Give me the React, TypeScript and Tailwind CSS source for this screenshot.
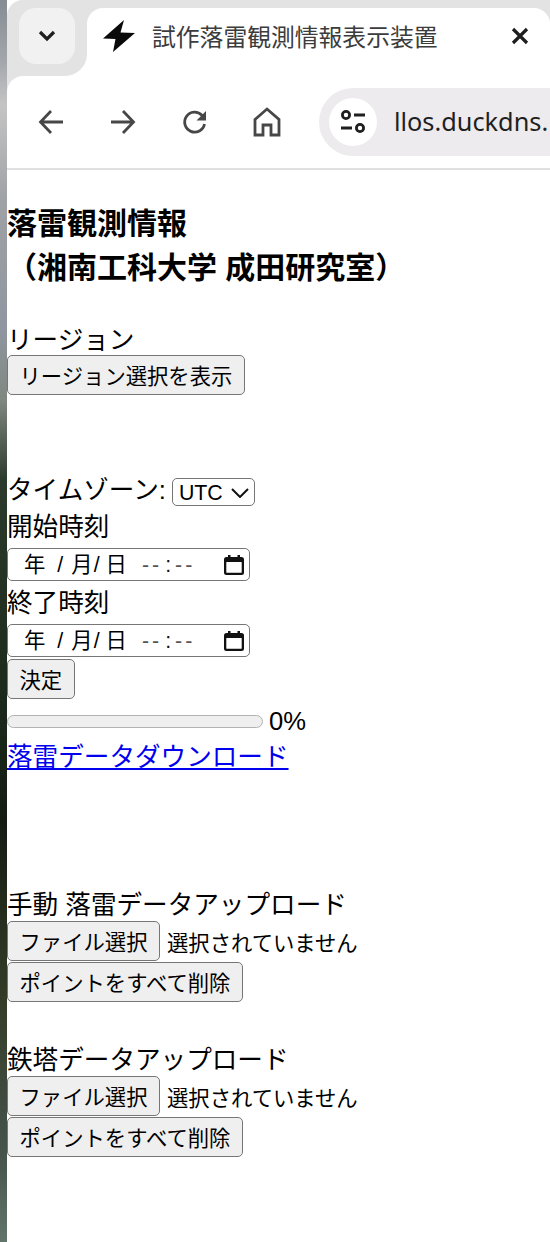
import React from 'react';

const pageFont = "font-['Liberation_Sans','Noto_Sans_CJK_JP',sans-serif]";

const NativeButton: React.FC<{ label: string; className?: string }> = ({ label, className = '' }) => (
  <button
    type="button"
    className={`block h-10 px-[11.500px] pt-[5px] text-[21.33px] leading-none text-black bg-[#efefef] border border-[#767676] rounded-[5px] whitespace-nowrap ${className}`}
  >
    {label}
  </button>
);

const CalendarIcon = () => (
  <svg width="22" height="22" viewBox="0 0 22 22" className="shrink-0">
    <path d="M5 1h2.500v2h7V1H17v2h1.500A2.500 2.500 0 0 1 21 5.500v13a2.500 2.500 0 0 1-2.500 2.500h-15A2.500 2.500 0 0 1 1 18.500v-13A2.500 2.500 0 0 1 3.500 3H5z" fill="#111" />
    <rect x="3.300" y="8" width="15.400" height="10.700" rx="0.500" fill="#fff" />
  </svg>
);

const DateTimeField = () => (
  <div className="flex items-center h-[33px] w-[243px] pt-[2px] border border-[#767676] rounded-[5px] bg-white text-[21.33px] leading-none text-black">
    <span className="ml-[16px]">年</span>
    <span className="ml-[12px] mr-[8px]">/</span>
    <span>月</span>
    <span className="mx-[1px]">/</span>
    <span className="ml-[5px]">日</span>
    <span className="ml-[15px] text-[#555] tracking-[3px]">--</span>
    <span className="ml-[3px] text-[#111]">:</span>
    <span className="ml-[4px] text-[#555] tracking-[3px]">--</span>
    <span className="ml-auto mr-[4px] -mt-[2px]"><CalendarIcon /></span>
  </div>
);

const FileRow = () => (
  <div className="flex items-center">
    <NativeButton label="ファイル選択" />
    <span className="ml-[7px] mt-[8px] text-[21.33px] leading-none text-black">選択されていません</span>
  </div>
);

const BrowserChrome = () => (
  <div className="bg-[#e3e3e3] rounded-tl-[16px] overflow-hidden">
    {/* Tab strip */}
    <div className="flex h-[76px] bg-white">
      <div className="w-[80px] shrink-0 bg-[#e3e3e3] rounded-br-[22px] pt-2 pl-3">
        <div className="flex items-center justify-center w-14 h-14 rounded-[17px] bg-[#f1f1f1]">
          <svg width="20" height="14" viewBox="0 0 20 14" fill="none">
            <path d="M3 3l7 7 7-7" stroke="#1f1f1f" strokeWidth="3.200" />
          </svg>
        </div>
      </div>
      <div className="flex-1 bg-[#e3e3e3] pt-2">
        <div className="flex items-center h-full pl-[15px] pr-[21px] pb-[12px] bg-white rounded-t-[16px]">
          <svg width="34" height="34" viewBox="0 0 34 34" className="shrink-0">
            <path d="M22 1L1 19.500l12.500.5L11 33l22-19-14.500-.5z" fill="#0a0a0a" />
          </svg>
          <span className="ml-[16px] text-[23.800px] leading-none text-[#3c3c3c] whitespace-nowrap font-['Noto_Sans_CJK_JP',sans-serif]">
            試作落雷観測情報表示装置
          </span>
          <svg width="18" height="18" viewBox="0 0 18 18" className="ml-auto" fill="none">
            <path d="M2 2l14 14M16 2L2 16" stroke="#1f1f1f" strokeWidth="3.200" />
          </svg>
        </div>
      </div>
    </div>
    {/* Toolbar */}
    <div className="flex items-center h-[92px] bg-white rounded-tl-[16px]">
      <svg width="26" height="26" viewBox="0 0 26 26" fill="none" className="ml-[31px]">
        <path d="M25 13H3M13 2L2.500 13 13 24" stroke="#474747" strokeWidth="2.800" />
      </svg>
      <svg width="26" height="26" viewBox="0 0 26 26" fill="none" className="ml-[46px]">
        <path d="M1 13h22M13 2l10.500 11L13 24" stroke="#474747" strokeWidth="2.800" />
      </svg>
      <svg width="26" height="26" viewBox="0 0 26 26" fill="none" className="ml-[46px]">
        <path d="M22.500 15a10 10 0 1 1-2.600-8.800L23 9.500" stroke="#474747" strokeWidth="2.800" />
        <path d="M24 2v9.500h-9.500z" fill="#474747" />
      </svg>
      <svg width="28" height="30" viewBox="0 0 28 30" fill="none" className="ml-[45px]">
        <path d="M2 12.500L14 2l12 10.500V28h-8V18h-8v10H2z" stroke="#474747" strokeWidth="2.800" />
      </svg>
      <div className="flex items-center ml-[38px] h-[68px] flex-1 min-w-0 pl-[10px] bg-[#edebed] rounded-l-[34px]">
        <div className="flex items-center justify-center w-12 h-12 shrink-0 rounded-full bg-white">
          <svg width="26" height="26" viewBox="0 0 26 26" fill="none" stroke="#1f1f1f" strokeWidth="2.800">
            <circle cx="6" cy="6" r="3.600" />
            <path d="M14 6h11M1 19h11" />
            <circle cx="20" cy="19" r="3.600" />
          </svg>
        </div>
        <span className="ml-[17px] text-[25.300px] leading-none text-[#1f1f1f] whitespace-nowrap font-['Noto_Sans',sans-serif]">
          llos.duckdns.
        </span>
      </div>
    </div>
    <div className="h-[2px] bg-[#e0e0e0]" />
  </div>
);

export default function App() {
  return (
    <div className="w-[550px] h-[1242px] overflow-hidden pl-[7px] bg-[linear-gradient(to_bottom,#868c94_0px,#a2a6ac_60px,#c4c4c4_105px,#9fa2a6_200px,#8f96a0_330px,#7f887f_400px,#2c3a2c_480px,#1c2a1c_700px,#141c12_820px,#343c28_1000px,#45534a_1150px,#62756a_1242px)]">
      <div className={`h-full bg-white ${pageFont} text-[25.6px] text-black`}>
        <BrowserChrome />
        <div className="pt-[32px]">
          <h3 className="text-[30px] font-bold leading-[44px]">
            落雷観測情報
            <br />
            （湘南工科大学 成田研究室）
          </h3>
          <div className="mt-[30px] h-[35px] leading-[40px]">リージョン</div>
          <NativeButton label="リージョン選択を表示" />

          <div className="flex items-center mt-[79px] h-[36px]">
            <span className="-mt-[4px]">タイムゾーン:</span>
            <span className="relative ml-[6px] inline-block">
              <select className="block appearance-none w-[83px] h-[28px] pl-[6px] pt-[3px] text-[21.33px] leading-none border border-[#767676] rounded-[5px] bg-white">
                <option>UTC</option>
              </select>
              <svg width="18" height="10" viewBox="0 0 18 10" fill="none" className="absolute right-[6px] top-[10px] pointer-events-none">
                <path d="M1 1l8 8 8-8" stroke="#111" strokeWidth="2" />
              </svg>
            </span>
          </div>
          <div className="-mt-[3px] h-[36px] leading-[40px]">開始時刻</div>
          <div className="mt-[5px]"><DateTimeField /></div>
          <div className="mt-[3px] h-[36px] leading-[38px]">終了時刻</div>
          <div className="mt-[4px]"><DateTimeField /></div>
          <NativeButton label="決定" className="mt-[2px]" />

          <div className="flex items-center mt-[4px] h-[36px]">
            <div className="w-[256px] h-[13px] rounded-full bg-[#efefef] border border-[#b2b2b2]" />
            <span className="ml-[6px]">0%</span>
          </div>
          <a href="#" className="block leading-[36px] w-fit text-[#0000ee] underline">
            落雷データダウンロード
          </a>

          <div className="mt-[111px] h-[36px] leading-[38px]">手動 落雷データアップロード</div>
          <div className="-mt-px"><FileRow /></div>
          <NativeButton label="ポイントをすべて削除" className="mt-px" />

          <div className="mt-[39px] h-[36px] leading-[38px]">鉄塔データアップロード</div>
          <div className="-mt-px"><FileRow /></div>
          <NativeButton label="ポイントをすべて削除" className="mt-px" />
        </div>
      </div>
    </div>
  );
}
